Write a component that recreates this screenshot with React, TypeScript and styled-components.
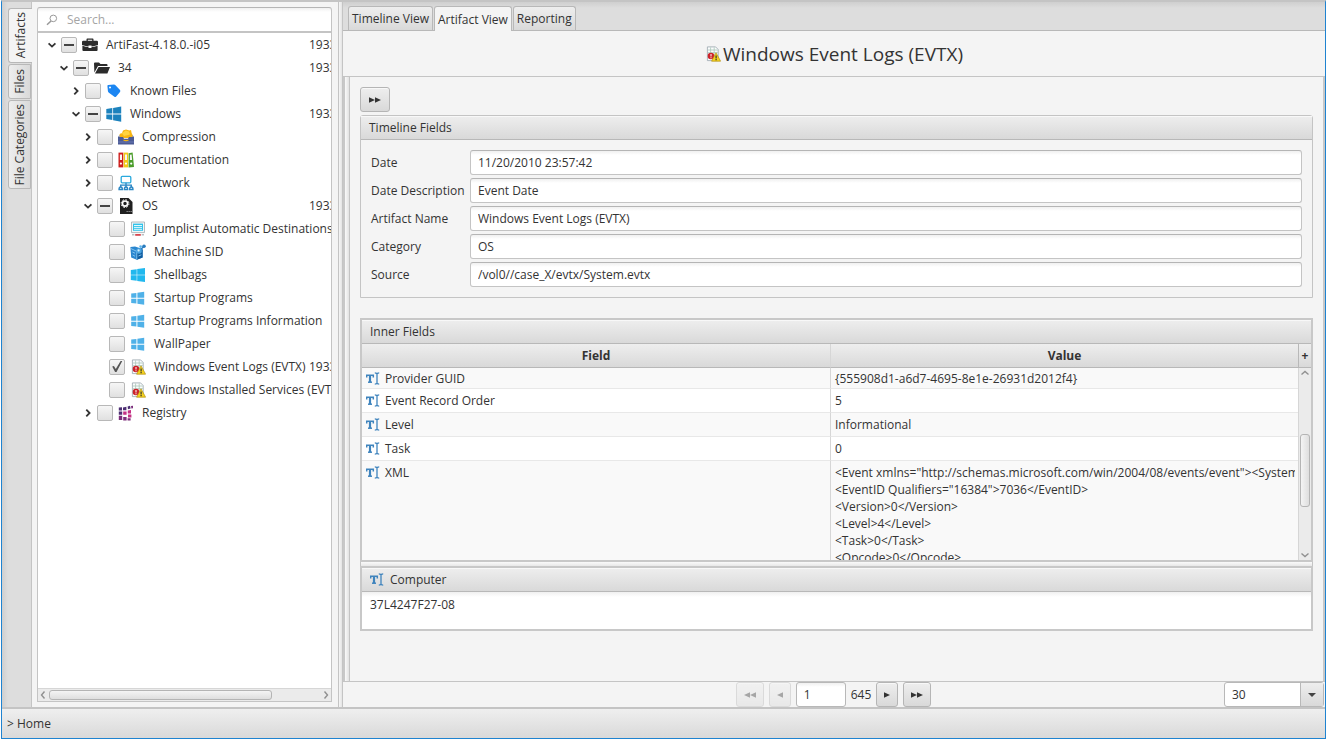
import React, { useEffect, useRef } from "react";
import styled, { createGlobalStyle, css } from "styled-components";

const GlobalStyle = createGlobalStyle`
  *, *::before, *::after { box-sizing: border-box; }
  body { margin: 0; background: #fff; }
  body, button, input, select {
    font-family: "Open Sans", "Noto Sans", sans-serif;
    font-size: 12px;
    line-height: 17px;
    color: #333;
  }
`;

const raised = "linear-gradient(#eeeeee, #d9d9d9)";
const line = "#c4c4c4";

const Window = styled.div`
  display: flex;
  flex-direction: column;
  min-height: calc(100vh - 4px);
  margin: 0 4px 4px 1px;
  border: 1px solid #1f83d0;
  border-top: 2px solid #c4c4c4;
  background: #f4f4f4;
`;

const Main = styled.div`
  display: flex;
  flex: 1;
  min-height: 0;
`;

const SideTabs = styled.nav`
  display: flex;
  flex-direction: column;
  gap: 1px;
  width: 30px;
  padding: 6px 0 0 6px;
  background: linear-gradient(90deg, #cfcfcf, #dddddd 6px);
  border-right: 1px solid ${line};
`;

const SideTab = styled.button<{ $active?: boolean; $size: number }>`
  display: flex;
  align-items: center;
  justify-content: center;
  height: ${(p) => p.$size}px;
  width: ${(p) => (p.$active ? 24 : 23)}px;
  padding: 0;
  border: 1px solid #b8b8b8;
  border-right: ${(p) => (p.$active ? "0" : "1px solid #b8b8b8")};
  border-radius: 3px 0 0 3px;
  background: ${(p) => (p.$active ? "#f4f4f4" : "linear-gradient(90deg, #eeeeee, #d9d9d9)")};
  white-space: nowrap;

  span {
    writing-mode: vertical-rl;
    transform: rotate(180deg);
  }
`;

const Sidebar = styled.section`
  display: flex;
  flex-direction: column;
  width: 306px;
  padding: 5px 6px 5px 5px;
`;

const SearchBox = styled.label`
  display: flex;
  align-items: center;
  gap: 9px;
  height: 25px;
  padding: 0 8px;
  border: 1px solid ${line};
  border-top-color: #b5b5b5;
  border-radius: 3px 3px 0 0;
  background: linear-gradient(#f0f0f0, #fff 4px);

  input {
    flex: 1;
    min-width: 0;
    padding: 0;
    border: 0;
    outline: 0;
    background: transparent;
  }
  input::placeholder { color: #a5a5a5; opacity: 1; }
`;

const TreeBox = styled.div`
  display: flex;
  flex-direction: column;
  flex: 1;
  border: 1px solid ${line};
  background: #fff;
`;

const Tree = styled.ul`
  flex: 1;
  margin: 0;
  padding: 0;
  list-style: none;
  overflow: hidden;
`;

const TreeRow = styled.li<{ $level: number }>`
  display: flex;
  align-items: center;
  height: 23px;
  padding-left: ${(p) => 9 + p.$level * 12}px;
  overflow: hidden;
`;

const Chevron = styled.span`
  display: flex;
  width: 14px;
`;

const TreeLabel = styled.label`
  display: flex;
  align-items: center;
  flex: 1;
  min-width: 0;
  white-space: nowrap;
  overflow: hidden;

  svg { flex: none; margin: 0 8px 0 5px; }
`;

const CheckBox = styled.input`
  appearance: none;
  display: grid;
  place-items: center;
  flex: none;
  width: 16px;
  height: 16px;
  margin: 0;
  border: 1px solid #b8b8b8;
  border-radius: 2px;
  background: linear-gradient(#f6f6f6, #e0e0e0);

  &:indeterminate::before {
    content: "";
    width: 10px;
    height: 2px;
    background: #444;
  }
  &:checked::before {
    content: "";
    width: 12px;
    height: 12px;
    background: #555;
    clip-path: polygon(10% 50%, 24% 46%, 40% 70%, 80% 4%, 94% 4%, 46% 96%, 34% 96%);
  }
`;

const Count = styled.span`
  flex: none;
  width: 22px;
  overflow: hidden;
`;

const HScroll = styled.div`
  display: flex;
  align-items: center;
  height: 13px;
  border-top: 1px solid #d6d6d6;
  background: #ebebeb;

  i {
    width: 223px;
    height: 10px;
    margin: 0 auto 0 1px;
    border: 1px solid #b4b4b4;
    border-radius: 3px;
    background: linear-gradient(#f4f4f4, #dedede);
  }
`;

const Divider = styled.div`
  width: 5px;
  border: solid ${line};
  border-width: 0 1px;
  background: linear-gradient(90deg, #f6f6f6, #e4e4e4);
`;

const Workspace = styled.main`
  display: flex;
  flex-direction: column;
  flex: 1;
  min-width: 0;
`;

const TabBar = styled.nav`
  display: flex;
  align-items: flex-end;
  gap: 1px;
  height: 29px;
  padding: 0 5px;
  border-bottom: 1px solid #b8b8b8;
  background: linear-gradient(#cfcfcf, #dddddd 6px);
`;

const Tab = styled.button<{ $active?: boolean }>`
  height: 24px;
  padding: 0 3px;
  border: 1px solid #b8b8b8;
  border-bottom: 0;
  border-radius: 3px 3px 0 0;
  background: ${raised};
  white-space: nowrap;
  ${(p) =>
    p.$active &&
    css`
      height: 25px;
      margin-bottom: -1px;
      background: #f4f4f4;
    `}
`;

const Title = styled.h1`
  display: flex;
  align-items: center;
  justify-content: center;
  gap: 2px;
  height: 46px;
  margin: 0;
  border-bottom: 1px solid ${line};
  font-size: 19px;
  line-height: 28px;
  font-weight: 400;
`;

const Content = styled.div`
  display: flex;
  flex: 1;
  border-right: 2px solid #c8c8c8;
`;

const Rail = styled.div`
  width: 7px;
  border-left: 2px solid #c8c8c8;
  border-right: 1px solid ${line};
  background: linear-gradient(90deg, #fafafa, #e2e2e2);
`;

const Panels = styled.div`
  display: flex;
  flex-direction: column;
  flex: 1;
  min-width: 0;
  padding: 10px;
`;

const Button = styled.button<{ $wide?: boolean }>`
  display: flex;
  align-items: center;
  justify-content: center;
  width: ${(p) => (p.$wide ? 28 : 22)}px;
  height: 25px;
  padding: 0;
  border: 1px solid #b5b5b5;
  border-radius: 3px;
  background: ${raised};
  box-shadow: inset 0 1px #f8f8f8;
  color: #333;

  &:disabled { opacity: 0.4; }
`;

const ExpandButton = styled(Button)`
  width: 30px;
  margin-bottom: 3px;
`;

const PaneTitle = styled.h2`
  display: flex;
  align-items: center;
  gap: 6px;
  height: 24px;
  margin: 0;
  padding: 0 8px;
  border-bottom: 1px solid #b8b8b8;
  background: ${raised};
  box-shadow: inset 0 1px #f8f8f8;
  font-size: 12px;
  font-weight: 400;
`;

const Pane = styled.section`
  margin-bottom: 20px;
  border: 1px solid ${line};
  border-radius: 3px 3px 0 0;
`;

const Fields = styled.div`
  display: flex;
  flex-direction: column;
  gap: 3px;
  padding: 10px;
`;

const Field = styled.label`
  display: grid;
  grid-template-columns: 99px 1fr;
  align-items: center;

  input {
    height: 25px;
    min-width: 0;
    padding: 0 7px;
    border: 1px solid ${line};
    border-top-color: #b5b5b5;
    border-radius: 3px;
    background: linear-gradient(#f0f0f0, #fff 4px);
  }
`;

const Framed = styled.section`
  border: 2px solid #c8c8c8;
`;

const Splitter = styled.div`
  height: 4px;
  border: solid ${line};
  border-width: 0 1px;
  background: linear-gradient(#fafafa, #e8e8e8);
`;

const Grid = styled.div`
  display: flex;
  height: 216px;
  overflow: hidden;
`;

const Table = styled.table`
  flex: none;
  width: calc(100% - 13px);
  background: #fff;
  table-layout: fixed;
  border-collapse: separate;
  border-spacing: 0;
  height: 216px;

  th {
    height: 24px;
    padding: 0;
    border-bottom: 1px solid #b8b8b8;
    background: ${raised};
    font-weight: 700;
  }
  td {
    padding: 0 3px 0 4px;
    border-bottom: 1px solid #e8e8e8;
    white-space: pre;
    overflow: hidden;
  }
  th + th, td + td { border-left: 1px solid #d6d6d6; }
  tbody tr:nth-child(odd) { background: #f9f9f9; }
`;

const Row = styled.tr<{ $height: number }>`
  height: ${(p) => p.$height}px;
`;

const FieldName = styled.span`
  display: flex;
  align-items: center;
  gap: 5px;
`;

const Clipped = styled.div`
  height: 99px;
  padding-top: 3px;
  overflow: hidden;
`;

const GridSide = styled.div`
  display: flex;
  flex-direction: column;
  width: 13px;
`;

const ColumnButton = styled.button`
  height: 24px;
  padding: 0;
  border: solid #b8b8b8;
  border-width: 0 0 1px 1px;
  background: ${raised};
  font-size: 12px;
  font-weight: 700;
`;

const VScroll = styled.div`
  display: flex;
  flex-direction: column;
  align-items: center;
  flex: 1;
  border-left: 1px solid #d6d6d6;
  background: #ebebeb;

  i {
    width: 10px;
    height: 73px;
    margin: 56px 0 auto;
    border: 1px solid #b4b4b4;
    border-radius: 3px;
    background: linear-gradient(90deg, #f4f4f4, #dedede);
  }
`;

const Detail = styled.div`
  height: 37px;
  padding: 4px 8px;
  background: linear-gradient(#f0f0f0, #fff 5px);
`;

const Pager = styled.div`
  display: grid;
  grid-template-columns: 1fr auto 1fr;
  height: 26px;
  padding-right: 1px;
  border-top: 1px solid ${line};
`;

const PagerControls = styled.div`
  grid-column: 2;
  display: flex;
  align-items: center;
  gap: 5px;

  input {
    width: 50px;
    height: 25px;
    padding: 0 7px;
    border: 1px solid #b8b8b8;
    border-radius: 3px;
    background: linear-gradient(#f0f0f0, #fff 4px);
  }
`;

const PageSize = styled.div`
  position: relative;
  justify-self: end;
  width: 100px;

  select {
    appearance: none;
    width: 100%;
    height: 25px;
    padding: 0 7px;
    border: 1px solid #b8b8b8;
    border-radius: 3px;
    background: #fff;
  }
  span {
    position: absolute;
    top: 1px;
    right: 1px;
    display: grid;
    place-items: center;
    width: 23px;
    height: 23px;
    border-left: 1px solid #b8b8b8;
    background: ${raised};
    pointer-events: none;
  }
`;

const Footer = styled.footer`
  display: flex;
  align-items: center;
  height: 31px;
  padding: 0 5px;
  border-top: 2px solid ${line};
  background: linear-gradient(#efefef, #d9d9d9);

  a { color: inherit; text-decoration: none; }
`;

type Dir = "left" | "right" | "up" | "down";
const turns: Record<Dir, number> = { right: 0, down: 90, left: 180, up: 270 };

const Arrow = ({ dir, thin }: { dir: Dir; thin?: boolean }) => (
  <svg width="10" height="10" viewBox="0 0 10 10" fill="none">
    <path
      d={thin ? "M3.5 1.5 6.5 5 3.5 8.5" : "M3.3 1.6 6.6 5 3.3 8.4"}
      stroke={thin ? "#909090" : "#333"}
      strokeWidth={thin ? 1.4 : 1.8}
      transform={`rotate(${turns[dir]} 5 5)`}
    />
  </svg>
);

const Play = ({ double, back }: { double?: boolean; back?: boolean }) => (
  <svg width={double ? 12 : 6} height="6" viewBox={double ? "0 0 12 6" : "0 0 6 6"} fill="#333">
    <g transform={back ? (double ? "rotate(180 6 3)" : "rotate(180 3 3)") : undefined}>
      <path d="M0 0.3 6 3 0 5.7Z" />
      {double && <path d="M6 0.3 12 3 6 5.7Z" />}
    </g>
  </svg>
);

const TextFieldIcon = () => (
  <svg width="14" height="13" viewBox="0 0 14 13" fill="none" stroke="#3f84bd">
    <path d="M0.7 5.4V3.2H7.3V5.4" strokeWidth="1.5" />
    <path d="M4 3V10" strokeWidth="2.2" />
    <path d="M2 10.2H6" strokeWidth="1.5" />
    <path d="M8.8 0.9C10.3 0.9 11 1.3 11 2V11C11 11.7 10.3 12.1 8.8 12.1M13.2 0.9C11.7 0.9 11 1.3 11 2V11C11 11.7 11.7 12.1 13.2 12.1" strokeWidth="1.3" />
  </svg>
);

type IconName =
  | "case" | "folder" | "tag" | "windows" | "archive" | "binders" | "network"
  | "os" | "jumplist" | "machine" | "shellbags" | "startup" | "log" | "registry";

const art: Record<IconName, React.ReactNode> = {
  case: (
    <g fill="#2b2b2b">
      <path d="M4.5 3.8V2.4Q4.5 1.6 5.3 1.6H10.7Q11.5 1.6 11.5 2.4V3.8H14.8Q16 3.8 16 5V8Q12 9.3 9.5 9.4V8.6H6.5V9.4Q4 9.3 0 8V5Q0 3.8 1.2 3.8ZM5.8 3.8H10.2V2.8H5.8Z" />
      <path d="M0.4 8.7Q4 9.9 6.5 10V11H9.5V10Q12 9.9 15.6 8.7V13Q15.6 14 14.6 14H1.4Q0.4 14 0.4 13Z" />
    </g>
  ),
  folder: <path fill="#2b2b2b" d="M0 3.5Q0 2.5 1 2.5H5L6.5 4H12.5Q13.5 4 13.5 5V6H4L0.4 12.5ZM4.6 7H16L13.4 13.4H1Z" />,
  tag: <path fill="#1c86f2" fillRule="evenodd" d="M1.4 3Q1.4 2.2 2.2 2.1L8 1.6Q8.8 1.6 9.5 2.3L14 7Q14.7 8 14 9L10 13.8Q9.2 14.4 8.4 13.8L2.6 9.4Q2 8.8 1.9 8ZM4 3.4A1 1 0 1 0 4.1 5.4 1 1 0 1 0 4 3.4Z" />,
  windows: <path fill="#1c82bd" d="M0.3 3 6.3 2V7.6H0.3ZM7.1 1.9 15.2 0.4V7.6H7.1ZM0.3 8.4H6.3V14.1L0.3 13.1ZM7.1 8.4H15.2V15.7L7.1 14.3Z" />,
  archive: (
    <>
      <path fill="#f7b512" d="M1.5 9V5.5Q2.4 4 4 4.2L5 1.4 8 0.4 11.4 1.4 13 1 13.6 4 14.8 6.4V9Z" />
      <path fill="#ffd440" d="M4 4.2 7.6 1.6 11 2.4 12 5.6 6 7Z" />
      <path fill="#4c5b94" d="M0 8H5L6 9.8H10L11 8H16V15.4H0Z" />
      <path fill="#6879b3" d="M0 8 1.5 6V8ZM16 8 14.5 6V8ZM0 12.4H16V13.4H0Z" />
      <path stroke="#f7b512" fill="none" strokeWidth="1.2" d="M5.5 11Q8 12.4 10.5 11" />
    </>
  ),
  binders: (
    <>
      <path fill="#cd1f1c" d="M0.5 0.6H5.3V15.4H0.5Z" />
      <path fill="#f2ca16" d="M5.7 0.6H10.2V15.4H5.7Z" />
      <path fill="#4b9d2b" d="M10.6 1.2 14.6 0.6 16 15 10.6 15.4Z" />
      <path fill="#f7f7f7" d="M1.9 2.5H4V8H1.9ZM7 2.5H9V8H7ZM11.9 2.7 13.6 2.5 14.1 8H11.9Z" />
      <circle cx="2.9" cy="11.6" r="1.1" fill="#fff" /><circle cx="8" cy="11.6" r="1.1" fill="#fff" /><circle cx="13.2" cy="11.6" r="1.1" fill="#fff" />
    </>
  ),
  network: (
    <g fill="none" stroke="#2a86c4" strokeWidth="1.3">
      <rect x="3.2" y="1.4" width="9.6" height="6.4" rx="1" stroke="#2aa9dd" />
      <path d="M8 7.8V12M2.7 12V10.2H13.3V12" />
      <path d="M1 14.5Q1 12 2.7 12T4.4 14.5ZM6.3 14.5Q6.3 12 8 12T9.7 14.5ZM11.6 14.5Q11.6 12 13.3 12T15 14.5Z" />
    </g>
  ),
  os: (
    <>
      <path fill="#202020" d="M2 0H10.5L14.5 4V16H2Z" />
      <circle cx="7" cy="5.6" r="2.6" fill="none" stroke="#fff" strokeWidth="1.7" />
      <circle cx="7" cy="5.6" r="3.9" fill="none" stroke="#fff" strokeWidth="1" strokeDasharray="1.6 1.46" />
      <path stroke="#8a8a8a" strokeDasharray="1.4 .6" d="M8.5 13.5H14" />
    </>
  ),
  jumplist: (
    <>
      <path fill="#f3f6f7" stroke="#a9b4b8" strokeWidth=".9" d="M1.5 1H14.5V11.6H1.5Z" />
      <path fill="#31c3ea" d="M3 2.6H13V9.8H3Z" />
      <path stroke="#e3f8fd" d="M4 4.5H12M4 6.4H12M4 8.3H12" />
      <path fill="#b9bfc2" d="M2 13H4.4V14.6H2ZM11.6 13H14V14.6H11.6Z" />
      <path fill="#d8474f" d="M5.2 13H10.8V14.8H5.2Z" />
    </>
  ),
  machine: (
    <>
      <path fill="#2a86cf" d="M0.4 3 5 2.4 12.6 5V13.4L6.8 15.8 1.2 13.4Z" />
      <path fill="#0f5c9f" d="M6.8 7.6 12.6 5.6V13.4L6.8 15.8Z" />
      <path fill="none" stroke="#8ccbf4" strokeWidth=".9" d="M1 4.6 6.8 7.4M6.8 7.4V15M2.4 8 5 9.2M2.6 11 5 12.2M8.4 12 11.4 10.8" />
      <path stroke="#2a7dc0" strokeWidth="1.4" d="M10 6 14 2.4" />
      <circle cx="9" cy="7" r="2.8" fill="#4ba5e3" /><circle cx="14" cy="2.2" r="1.8" fill="#2a7dc0" />
      <circle cx="10.6" cy="2.6" r="1.3" fill="#5db3ec" />
      <circle cx="8.6" cy="6.4" r="1.1" fill="#d5effd" />
    </>
  ),
  shellbags: <path fill="#21b8ee" d="M0.8 3 6.7 2.2V7.7H0.8ZM7.2 2.1 15 1V7.7H7.2ZM0.8 8.3H6.7V13.8L0.8 13ZM7.2 8.3H15V15L7.2 13.9Z" />,
  startup: <path fill="#4fb1e8" d="M1.2 3.6 6.4 2.9V7.7H1.2ZM7.4 2.7 14.2 1.8V7.7H7.4ZM1.2 8.8H6.4V13.6L1.2 12.9ZM7.4 8.8H14.2V14.8L7.4 13.8Z" />,
  log: (
    <>
      <path fill="#fbfcfd" stroke="#98a4ac" strokeWidth=".8" d="M2.4 0.9H10.6L13.2 3.5V14.6H2.4Z" />
      <path stroke="#a9c6b8" strokeWidth=".8" d="M3 4H12.8M3 6.6H12.8M5.6 1.4V7M9.2 1.4V9" />
      <circle cx="6" cy="10" r="3.3" fill="#cc2229" />
      <path fill="#fff" d="M5.5 8H6.5V10.6H5.5ZM5.5 11.2H6.5V12.2H5.5Z" />
      <path fill="#f5d21c" stroke="#b49214" strokeWidth=".7" d="M11 6.8 15.6 15.2H6.6Z" />
      <path fill="#333" d="M10.5 9.4H11.7V12.4H10.5ZM10.5 13.1H11.7V14.3H10.5Z" />
    </>
  ),
  registry: (
    <>
      <path fill="#4d2f73" d="M0.8 2.6 4 2.2V5.4H0.8ZM5 2.4 8.4 1.8V5.2H5ZM0.8 6.4H4.2V9.8H0.8ZM9.6 1.4 12 0.8 12.6 3.6 10 4.2Z" />
      <path fill="#c43084" d="M5.2 6.4H8.6V9.8H5.2ZM9.8 5.6 13 5V8.4H9.8ZM10 9.4H13.4V12.4H10Z" />
      <path fill="#7d2d7b" d="M0.8 10.8H4.2V15H0.8ZM5.2 12H8.6V15.4H5.2ZM9.6 13.2H12.6V15.4H9.6ZM13 1 15 0.8V3.2L13.4 3.6Z" />
    </>
  ),
};

const Icon = ({ name }: { name: IconName }) => (
  <svg width="16" height="16" viewBox="0 0 16 16">{art[name]}</svg>
);

type Node = {
  label: string;
  level: number;
  icon: IconName;
  open?: boolean;
  state?: "mixed" | "on";
  count?: string;
};

const nodes: Node[] = [
  { label: "ArtiFast-4.18.0.-i05", level: 0, icon: "case", open: true, state: "mixed", count: "1933" },
  { label: "34", level: 1, icon: "folder", open: true, state: "mixed", count: "1933" },
  { label: "Known Files", level: 2, icon: "tag", open: false },
  { label: "Windows", level: 2, icon: "windows", open: true, state: "mixed", count: "1933" },
  { label: "Compression", level: 3, icon: "archive", open: false },
  { label: "Documentation", level: 3, icon: "binders", open: false },
  { label: "Network", level: 3, icon: "network", open: false },
  { label: "OS", level: 3, icon: "os", open: true, state: "mixed", count: "1933" },
  { label: "Jumplist Automatic Destinations", level: 4, icon: "jumplist" },
  { label: "Machine SID", level: 4, icon: "machine" },
  { label: "Shellbags", level: 4, icon: "shellbags" },
  { label: "Startup Programs", level: 4, icon: "startup" },
  { label: "Startup Programs Information", level: 4, icon: "startup" },
  { label: "WallPaper", level: 4, icon: "startup" },
  { label: "Windows Event Logs (EVTX)", level: 4, icon: "log", state: "on", count: "1933" },
  { label: "Windows Installed Services (EVTX)", level: 4, icon: "log" },
  { label: "Registry", level: 3, icon: "registry", open: false },
];

const TreeItem = ({ node }: { node: Node }) => {
  const box = useRef<HTMLInputElement>(null);
  useEffect(() => {
    if (box.current) box.current.indeterminate = node.state === "mixed";
  }, [node.state]);
  return (
    <TreeRow $level={node.level}>
      <Chevron>{node.open !== undefined && <Arrow dir={node.open ? "down" : "right"} />}</Chevron>
      <TreeLabel>
        <CheckBox ref={box} type="checkbox" defaultChecked={node.state === "on"} />
        <Icon name={node.icon} />
        {node.label}
      </TreeLabel>
      {node.count && <Count>{node.count}</Count>}
    </TreeRow>
  );
};

const timelineFields = [
  ["Date", "11/20/2010 23:57:42"],
  ["Date Description", "Event Date"],
  ["Artifact Name", "Windows Event Logs (EVTX)"],
  ["Category", "OS"],
  ["Source", "/vol0//case_X/evtx/System.evtx"],
];

const innerFields = [
  { name: "Provider GUID", value: "{555908d1-a6d7-4695-8e1e-26931d2012f4}", height: 21 },
  { name: "Event Record Order", value: "5", height: 24 },
  { name: "Level", value: "Informational", height: 24 },
  { name: "Task", value: "0", height: 24 },
];

const xml = `<Event xmlns="http://schemas.microsoft.com/win/2004/08/events/event"><System><Provider
<EventID Qualifiers="16384">7036</EventID>
<Version>0</Version>
<Level>4</Level>
<Task>0</Task>
<Opcode>0</Opcode>`;

export default function App() {
  return (
    <>
      <GlobalStyle />
      <Window>
        <Main>
          <SideTabs>
            <SideTab $active $size={55}><span>Artifacts</span></SideTab>
            <SideTab $size={35}><span>Files</span></SideTab>
            <SideTab $size={89}><span>File Categories</span></SideTab>
          </SideTabs>
          <Sidebar>
            <SearchBox>
              <svg width="12" height="12" viewBox="0 0 12 12" fill="none" stroke="#999">
                <circle cx="7.3" cy="4.4" r="3.3" />
                <path d="M5 7 1 10.8" strokeWidth="1.5" />
              </svg>
              <input type="search" aria-label="Search" placeholder="Search..." />
            </SearchBox>
            <TreeBox>
              <Tree>
                {nodes.map((n) => <TreeItem key={n.label} node={n} />)}
              </Tree>
              <HScroll>
                <Arrow dir="left" thin />
                <i />
                <Arrow dir="right" thin />
              </HScroll>
            </TreeBox>
          </Sidebar>
          <Divider />
          <Workspace>
            <TabBar>
              <Tab>Timeline View</Tab>
              <Tab $active>Artifact View</Tab>
              <Tab>Reporting</Tab>
            </TabBar>
            <Title><Icon name="log" />Windows Event Logs (EVTX)</Title>
            <Content>
              <Rail />
              <Panels>
                <ExpandButton aria-label="Expand"><Play double /></ExpandButton>
                <Pane>
                  <PaneTitle>Timeline Fields</PaneTitle>
                  <Fields>
                    {timelineFields.map(([name, value]) => (
                      <Field key={name}>{name}<input type="text" defaultValue={value} /></Field>
                    ))}
                  </Fields>
                </Pane>
                <Framed>
                  <PaneTitle>Inner Fields</PaneTitle>
                  <Grid>
                    <Table>
                      <thead>
                        <tr><th>Field</th><th>Value</th></tr>
                      </thead>
                      <tbody>
                        {innerFields.map((f) => (
                          <Row key={f.name} $height={f.height}>
                            <td><FieldName><TextFieldIcon />{f.name}</FieldName></td>
                            <td>{f.value}</td>
                          </Row>
                        ))}
                        <Row $height={99}>
                          <td><Clipped><FieldName><TextFieldIcon />XML</FieldName></Clipped></td>
                          <td><Clipped>{xml}</Clipped></td>
                        </Row>
                      </tbody>
                    </Table>
                    <GridSide>
                      <ColumnButton aria-label="Choose columns">+</ColumnButton>
                      <VScroll>
                        <Arrow dir="up" thin />
                        <i />
                        <Arrow dir="down" thin />
                      </VScroll>
                    </GridSide>
                  </Grid>
                </Framed>
                <Splitter />
                <Framed>
                  <PaneTitle><TextFieldIcon />Computer</PaneTitle>
                  <Detail>37L4247F27-08</Detail>
                </Framed>
              </Panels>
            </Content>
            <Pager>
              <PagerControls>
                <Button $wide disabled aria-label="First page"><Play double back /></Button>
                <Button disabled aria-label="Previous page"><Play back /></Button>
                <input type="text" aria-label="Page" defaultValue="1" />
                645
                <Button aria-label="Next page"><Play /></Button>
                <Button $wide aria-label="Last page"><Play double /></Button>
              </PagerControls>
              <PageSize>
                <select aria-label="Rows per page" defaultValue="30">
                  <option>30</option>
                </select>
                <span>
                  <svg width="8" height="4" viewBox="0 0 8 4" fill="#444"><path d="M0 0H8L4 4Z" /></svg>
                </span>
              </PageSize>
            </Pager>
          </Workspace>
        </Main>
        <Footer><a href="#home">&gt; Home</a></Footer>
      </Window>
    </>
  );
}
